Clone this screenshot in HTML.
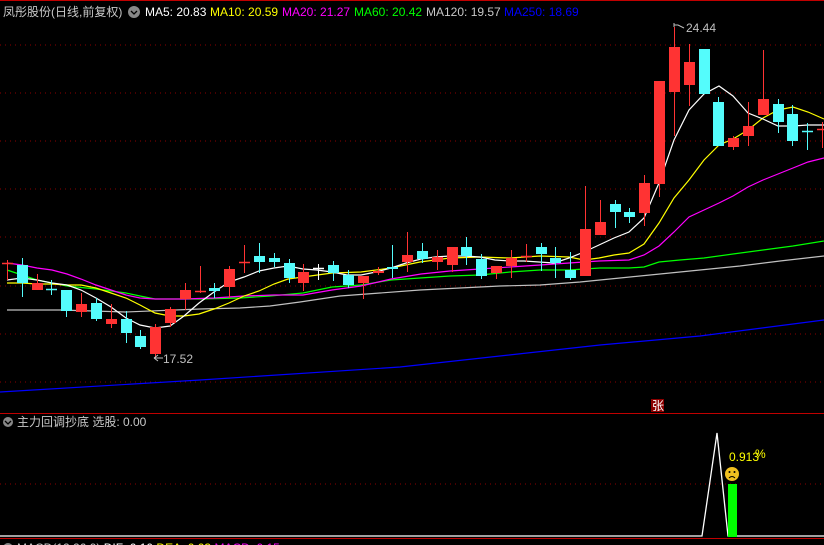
<!DOCTYPE html>
<html><head><meta charset="utf-8"><style>
body{margin:0;background:#000;width:824px;height:545px;overflow:hidden;font-family:"Liberation Sans","Noto Sans CJK SC",sans-serif}
svg{position:absolute;left:0;top:0}
text{font-family:"Liberation Sans","Noto Sans CJK SC",sans-serif;font-size:12px}
</style></head><body>
<svg width="824" height="545" xmlns="http://www.w3.org/2000/svg">
<rect width="824" height="545" fill="#000"/>
<line x1="0" y1="0.5" x2="824" y2="0.5" stroke="#c00000"/>
<g stroke="#8b0000" stroke-dasharray="1,4">
<line x1="0" y1="45" x2="824" y2="45"/><line x1="0" y1="93" x2="824" y2="93"/><line x1="0" y1="141" x2="824" y2="141"/><line x1="0" y1="189" x2="824" y2="189"/><line x1="0" y1="237" x2="824" y2="237"/><line x1="0" y1="286" x2="824" y2="286"/><line x1="0" y1="334" x2="824" y2="334"/><line x1="0" y1="382" x2="824" y2="382"/>
<line x1="0" y1="484" x2="824" y2="484"/>
</g>
<line x1="0" y1="413.5" x2="824" y2="413.5" stroke="#c00000"/>
<line x1="0" y1="538.5" x2="824" y2="538.5" stroke="#c00000"/>
<g fill="none" stroke-width="1.2">
<polyline stroke="#0000ff" points="0,392 200,380 400,367 600,345 700,336 824,320"/>
<polyline stroke="#c0c0c0" points="7,310 60,310 126,312 200,309 240,308 270,306 300,302 340,296 380,293 420,290 460,288 500,286 540,285 580,282 620,278 660,274 700,270 740,266 780,261 824,256"/>
<polyline stroke="#00ff00" points="7,270 22,275 37,280 52,283 67,286 96,289 126,293 140,296 155,299 200,299 240,298 270,296 303,293 332,287 361,285 391,280 420,278 450,276 480,275 510,272 540,270 569,270 600,268 629,268 644,267 659,262 680,260 704,258 733,254 763,250 793,246 824,241"/>
<polyline stroke="#ff00ff" points="7,263 22,265 37,268 52,270 67,274 81,279 96,285 111,290 126,295 140,298 155,299 184,299 214,298 244,296 274,295 303,295 332,290 361,286 391,279 421,274 450,271 480,269 510,267 540,265 569,263 599,261 629,260 644,255 659,246 674,232 689,217 704,210 719,203 733,196 748,187 763,180 778,174 793,168 808,162 824,158"/>
<polyline stroke="#ffff00" points="7,283 22,283 37,284 52,284 67,285 81,285 96,288 111,293 126,298 140,305 155,313 170,316 184,316 199,314 214,309 229,303 244,296 259,291 274,284 288,279 303,277 332,273 361,272 391,268 420,262 450,258 480,257 510,258 540,256 569,257 584,260 599,258 614,255 629,253 644,244 659,223 674,198 689,180 704,160 719,145 733,139 748,130 763,118 778,110 793,107 808,112 824,119"/>
<polyline stroke="#ffffff" points="7,280 22,278 37,280 52,283 67,285 81,290 96,298 111,307 126,318 140,325 155,328 170,326 184,316 199,303 214,292 229,282 244,277 259,271 274,268 288,266 303,269 317,270 332,272 347,275 361,275 376,272 391,268 406,263 421,259 435,257 450,256 465,256 480,257 495,260 510,261 524,261 539,262 554,263 569,258 584,252 599,245 614,238 629,232 644,218 659,183 674,140 689,110 704,94 719,86 733,96 748,113 763,119 778,126 793,126 808,125 824,125"/>
</g>
<g id="c"></g>
<text x="163" y="363" fill="#c0c0c0">17.52</text>
<path d="M163,358 H154 M154,358 l4,-3 M154,358 l4,3" stroke="#c0c0c0" fill="none"/>
<text x="686" y="32" fill="#c0c0c0">24.44</text>
<path d="M684,28 l-6,-3 h-4 M674,23 v4" stroke="#c0c0c0" fill="none"/>
<rect x="651" y="399" width="13" height="13" fill="#8b0000"/>
<text x="652" y="410" fill="#fff" font-size="11">张</text>
<polyline points="0,536 702,536 717,433 728,536 824,536" fill="none" stroke="#fff" stroke-width="1.3"/>
<rect x="728" y="484" width="9" height="53" fill="#00ff00"/>
<circle cx="732" cy="474" r="7" fill="#f0c020"/>
<circle cx="729.5" cy="472" r="1" fill="#000"/><circle cx="734.5" cy="472" r="1" fill="#000"/>
<path d="M729,478 q3,-3 6,0" stroke="#000" fill="none"/>
<text x="729" y="461" fill="#ffff00">0.913</text><text x="755" y="458" fill="#ffff00" font-size="11">%</text>
<circle cx="8" cy="422" r="5" fill="#888"/><path d="M5,421 l3,3 l3,-3" stroke="#000" fill="none" stroke-width="1.3"/>
<text x="17" y="426" fill="#c8c8c8">主力回调抄底  选股: 0.00</text>
<circle cx="8" cy="548" r="5" fill="#888"/>
<text x="17" y="552" fill="#c8c8c8">MACD(12,26,9) <tspan fill="#fff">DIF: 0.10</tspan> <tspan fill="#ff0">DEA: 0.03</tspan> <tspan fill="#f0f">MACD: 0.15</tspan></text>
<text x="3" y="16" fill="#c8c8c8">凤彤股份(日线,前复权)</text>
<circle cx="134" cy="12" r="6" fill="#888"/><path d="M131,11 l3,3 l3,-3" stroke="#000" fill="none" stroke-width="1.3"/>
<text x="145" y="16" fill="#fff">MA5: 20.83</text>
<text x="210" y="16" fill="#ffff00">MA10: 20.59</text>
<text x="282" y="16" fill="#ff00ff">MA20: 21.27</text>
<text x="354" y="16" fill="#00ff00">MA60: 20.42</text>
<text x="426" y="16" fill="#c8c8c8">MA120: 19.57</text>
<text x="504" y="16" fill="#0000ff">MA250: 18.69</text>
</svg>
<script>
var d=[
[0,'r',263,263,260,280],[1,'c',265,283,258,297],[2,'r',283,290,274,290],[3,'c',289,289,280,295],[4,'c',290,311,290,317],
[5,'r',304,312,293,317],[6,'c',303,319,298,321],[7,'r',319,324,304,328],[8,'c',319,333,311,343],[9,'c',336,347,330,349],
[10,'r',327,354,324,358],[11,'r',309,323,307,327],[12,'r',290,299,283,310],[13,'r',291,291,266,293],[14,'c',288,291,283,298],
[15,'r',269,287,266,298],[16,'r',262,262,245,273],[17,'c',256,262,243,273],[18,'c',258,262,253,267],[19,'c',263,278,259,283],
[20,'r',272,283,264,291],[21,'w',268,268,264,280],[22,'c',265,273,261,281],[23,'c',275,285,270,288],[24,'r',276,283,276,299],
[25,'r',271,273,267,275],[26,'c',267,269,245,278],[27,'r',255,262,232,272],[28,'c',251,259,243,263],[29,'r',257,262,250,270],
[30,'r',247,265,247,272],[31,'c',247,256,237,265],[32,'c',259,276,254,279],[33,'r',266,273,266,279],[34,'r',258,266,250,278],
[35,'r',256,256,244,262],[36,'c',247,254,243,271],[37,'c',258,263,247,278],[38,'c',270,278,252,280],[39,'r',229,276,186,276],
[40,'r',222,235,200,235],[41,'c',204,212,200,228],[42,'c',212,217,208,223],[43,'r',183,213,175,226],[44,'r',81,184,81,197],
[45,'r',47,92,27,136],[46,'r',62,85,44,106],[47,'c',49,94,49,94],[48,'c',102,146,97,146],[49,'r',138,147,136,150],
[50,'r',126,136,102,146],[51,'r',99,115,50,115],[52,'c',104,122,99,133],[53,'c',114,141,105,146],[54,'c',131,131,123,150],[55,'r',129,129,122,148]];
var g=document.getElementById('c'),s='';
d.forEach(function(a){var x=Math.round(7+14.82*a[0]),col=a[1]=='r'?'#ff3333':a[1]=='c'?'#54fcfc':'#ffffff';
s+='<line x1="'+(x+.5)+'" y1="'+a[4]+'" x2="'+(x+.5)+'" y2="'+a[5]+'" stroke="'+col+'"/>';
var h=a[3]-a[2];if(h<2){s+='<line x1="'+(x-5)+'" y1="'+(a[2]+.5)+'" x2="'+(x+6)+'" y2="'+(a[2]+.5)+'" stroke="'+col+'" stroke-width="1.5"/>';}
else s+='<rect x="'+(x-5)+'" y="'+a[2]+'" width="11" height="'+h+'" fill="'+col+'"/>';});
g.innerHTML=s;
</script>
</body></html>
